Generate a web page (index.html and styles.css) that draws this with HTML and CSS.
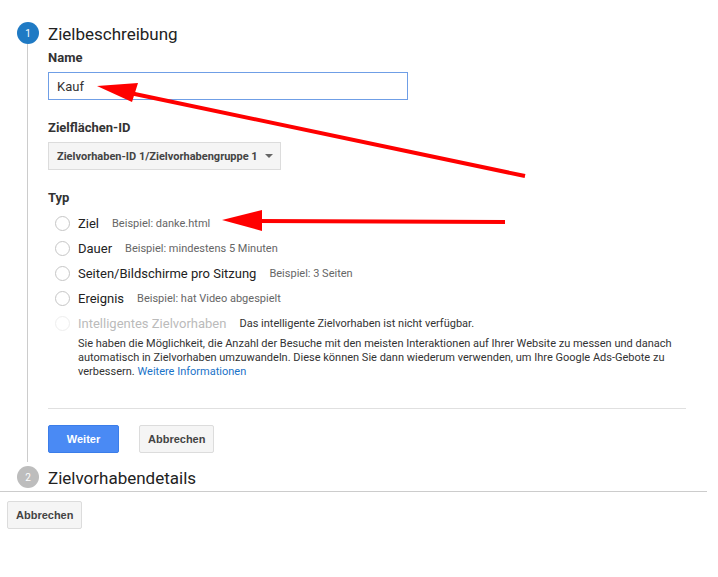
FILE: index.html
```html
<!DOCTYPE html>
<html lang="de">
<head>
    <meta charset="UTF-8">
    <title>Zielvorhaben einrichten</title>
    <link rel="stylesheet" href="styles.css">
</head>
<body>
    <div class="page">
        <div class="step step-active">
            <div class="rail">
                <span class="step-num blue">1</span>
                <span class="rail-line"></span>
            </div>
            <div class="step-body">
                <h2 class="step-title">Zielbeschreibung</h2>

                <label class="field-label" for="goalName">Name</label>
                <input type="text" id="goalName" class="text-input" value="Kauf">

                <div class="field-label gap-top">Zielflächen-ID</div>
                <button class="dropdown">Zielvorhaben-ID 1/Zielvorhabengruppe 1 <span class="caret"></span></button>

                <div class="field-label gap-top">Typ</div>
                <ul class="type-list">
                    <li><span class="radio"></span><span class="type-name">Ziel</span><span class="type-hint">Beispiel: danke.html</span></li>
                    <li><span class="radio"></span><span class="type-name">Dauer</span><span class="type-hint">Beispiel: mindestens 5 Minuten</span></li>
                    <li><span class="radio"></span><span class="type-name">Seiten/Bildschirme pro Sitzung</span><span class="type-hint">Beispiel: 3 Seiten</span></li>
                    <li><span class="radio"></span><span class="type-name">Ereignis</span><span class="type-hint">Beispiel: hat Video abgespielt</span></li>
                    <li class="disabled"><span class="radio"></span><span class="type-name">Intelligentes Zielvorhaben</span><span class="type-hint dark">Das intelligente Zielvorhaben ist nicht verfügbar.</span></li>
                </ul>
                <p class="smart-info">Sie haben die Möglichkeit, die Anzahl der Besuche mit den meisten Interaktionen auf Ihrer Website zu messen und danach automatisch in Zielvorhaben umzuwandeln. Diese können Sie dann wiederum verwenden, um Ihre Google Ads-Gebote zu verbessern. <a href="#">Weitere Informationen</a></p>

                <div class="divider"></div>

                <div class="actions">
                    <button class="btn btn-primary">Weiter</button>
                    <button class="btn">Abbrechen</button>
                </div>
            </div>
        </div>

        <div class="step">
            <div class="rail">
                <span class="step-num gray">2</span>
            </div>
            <div class="step-body">
                <h2 class="step-title">Zielvorhabendetails</h2>
            </div>
        </div>

        <div class="footer">
            <button class="btn">Abbrechen</button>
        </div>

        <!-- Markierungspfeile -->
        <svg class="arrows" width="718" height="577" viewBox="0 0 718 577">
            <line x1="525" y1="176" x2="130" y2="93" stroke="#ff0000" stroke-width="4"/>
            <polygon points="97,86 138,83 132,102" fill="#ff0000"/>
            <line x1="505" y1="222" x2="258" y2="221" stroke="#ff0000" stroke-width="4"/>
            <polygon points="222,220 262,210 262,231" fill="#ff0000"/>
        </svg>
    </div>
</body>
</html>
```

FILE: styles.css
```css
* {
    margin: 0;
    padding: 0;
    box-sizing: border-box;
}

body {
    font-family: Roboto, "Liberation Sans", Arial, sans-serif;
    background: white;
    color: #222;
}

.page {
    position: relative;
    width: 718px;
    height: 577px;
    padding-top: 22px;
}

.step {
    display: flex;
}

.rail {
    width: 48px;
    display: flex;
    flex-direction: column;
    align-items: flex-start;
    padding-left: 17px;
}

.step-num {
    width: 22px;
    height: 22px;
    border-radius: 50%;
    color: white;
    font-size: 10px;
    display: flex;
    align-items: center;
    justify-content: center;
    flex-shrink: 0;
}

.step-num.blue {
    background: #1f7ac4;
}

.step-num.gray {
    background: #bdbdbd;
}

.rail-line {
    flex: 1;
    width: 1px;
    margin-left: 10px;
    margin-bottom: 4px;
    background: #ccc;
}

.step-body {
    flex: 1;
    padding-right: 32px;
}

.step-title {
    font-size: 17px;
    font-weight: 400;
    line-height: 24px;
    color: #222;
}

.field-label {
    display: block;
    font-size: 13px;
    font-weight: 700;
    color: #333;
    margin-top: 4px;
    margin-bottom: 7px;
}

.gap-top {
    margin-top: 20px;
}

.text-input {
    width: 360px;
    height: 28px;
    border: 1px solid #6f9ee6;
    padding: 0 8px;
    font-family: Roboto, sans-serif;
    font-size: 13px;
    color: #333;
    outline: none;
}

.dropdown {
    display: flex;
    align-items: center;
    height: 28px;
    padding: 0 7px 0 8px;
    background: #f5f5f5;
    border: 1px solid #dcdcdc;
    font-family: Roboto, sans-serif;
    font-size: 11px;
    font-weight: 700;
    color: #444;
}

.caret {
    margin-left: 7px;
    border-left: 4px solid transparent;
    border-right: 4px solid transparent;
    border-top: 4px solid #666;
}

.type-list {
    list-style: none;
    margin-top: -1px;
}

.type-list li {
    display: flex;
    align-items: center;
    height: 25px;
    padding-left: 7px;
}

.radio {
    width: 15px;
    height: 15px;
    border: 1px solid #c6c6c6;
    border-radius: 50%;
    margin-right: 8px;
}

.type-name {
    font-size: 13px;
    color: #222;
    margin-right: 13px;
}

.type-hint {
    font-size: 11px;
    color: #666;
}

.type-hint.dark {
    color: #333;
}

.disabled .radio {
    border-color: #eee;
}

.disabled .type-name {
    color: #bbb;
}

.smart-info {
    margin-left: 30px;
    margin-top: 1px;
    font-size: 11px;
    line-height: 14px;
    color: #333;
}

.smart-info a {
    color: #1a73c8;
    text-decoration: none;
}

.divider {
    height: 1px;
    background: #e0e0e0;
    margin-top: 29px;
    width: 638px;
}

.actions {
    display: flex;
    gap: 20px;
    margin-top: 16px;
    margin-bottom: 13px;
}

.btn {
    height: 28px;
    padding: 0 8px;
    background: #f5f5f5;
    border: 1px solid #dcdcdc;
    border-radius: 2px;
    font-family: "Liberation Sans", Arial, sans-serif;
    font-size: 11px;
    font-weight: 700;
    color: #444;
}

.btn-primary {
    width: 71px;
    background: #4a8af4;
    border-color: #3b7de9;
    color: white;
}

.footer {
    border-top: 1px solid #ccc;
    width: 707px;
    margin-top: 1px;
    padding: 9px 0 0 7px;
}

.arrows {
    position: absolute;
    left: 0;
    top: 0;
    pointer-events: none;
}
```
